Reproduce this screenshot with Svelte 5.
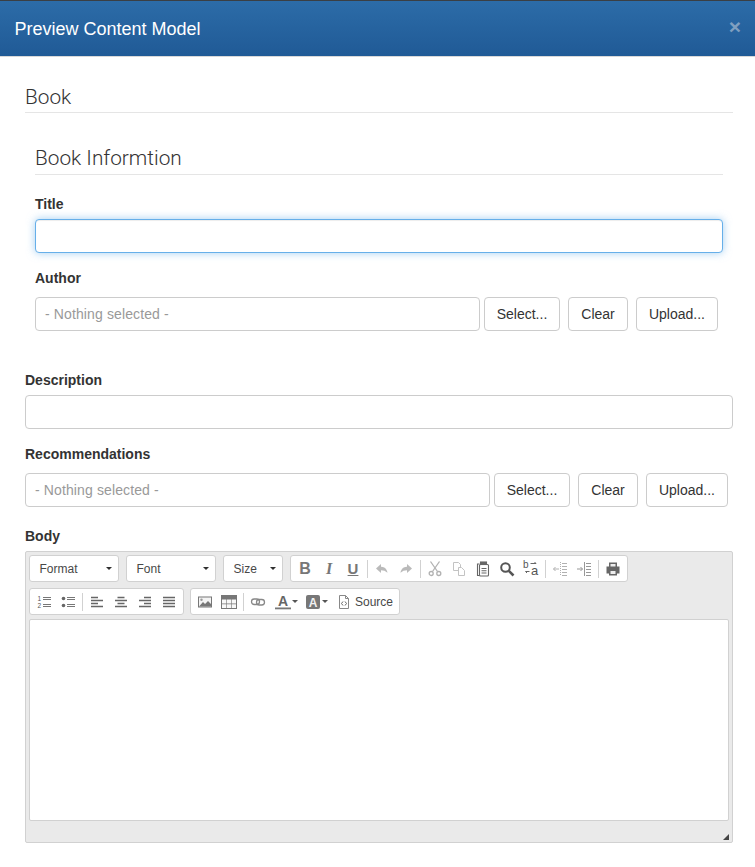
<script>
  const selects = [['Format', 90], ['Font', 90], ['Size', 60]];
</script>

{#snippet picker()}
  <div class="picker">
    <div class="fake-input">- Nothing selected -</div>
    <div class="btn b1">Select...</div>
    <div class="btn b2">Clear</div>
    <div class="btn b3">Upload...</div>
  </div>
{/snippet}

<div class="modal">
  <header class="head">
    <h1>Preview Content Model</h1>
    <span class="close">×</span>
  </header>
  <main class="body">
    <h2 class="legend">Book</h2>
    <section class="inner">
      <h2 class="legend two">Book Informtion</h2>
      <label class="lbl">Title</label>
      <div class="input focus"></div>
      <label class="lbl">Author</label>
      {@render picker()}
    </section>
    <label class="lbl desc">Description</label>
    <div class="input"></div>
    <label class="lbl">Recommendations</label>
    {@render picker()}
    <label class="lbl bodyl">Body</label>
    <div class="editor">
      <div class="row">
        {#each selects as [name, w]}
          <div class="combo" style="width:{w}px"><span>{name}</span><i class="caret"></i></div>
        {/each}
        <div class="grp">
          <span class="ic tx b">B</span>
          <span class="ic tx it">I</span>
          <span class="ic tx un">U</span>
          <span class="sep"></span>
          <span class="ic dim"><svg viewBox="0 0 16 16"><path d="M7 3 2 7.500 7 12V9.200c2.600 0 4.600.7 6.500 2.600C13 8.500 11 6 7 5.800z" fill="#777"/></svg></span>
          <span class="ic dim"><svg viewBox="0 0 16 16"><path d="M9 3l5 4.500L9 12V9.200c-2.600 0-4.600.7-6.500 2.600C3 8.500 5 6 9 5.800z" fill="#777"/></svg></span>
          <span class="sep"></span>
          <span class="ic dim"><svg viewBox="0 0 16 16" fill="none" stroke="#666" stroke-width="1.300"><path d="M3.500.5 10.500 10.500M12.500.5 5.500 10.500"/><circle cx="4.200" cy="12.500" r="2"/><circle cx="11.800" cy="12.500" r="2"/></svg></span>
          <span class="ic dim"><svg viewBox="0 0 16 16" fill="#fff" stroke="#888"><path d="M2.500 1.500h5l2 2v6h-7z"/><path d="M7.500 6.500h3l3 3v5h-6z"/></svg></span>
          <span class="ic"><svg viewBox="0 0 16 16" fill="none" stroke="#666" stroke-width="1.100"><path d="M4.500 3H2.500v11.500h2"/><rect x="4.500" y="3.500" width="9" height="11.500" rx="1"/><path d="M6.500 7.500h5M6.500 9.800h5M6.500 12h5"/><rect x="5.500" y="1" width="6" height="2.500" fill="#666"/></svg></span>
          <span class="ic"><svg viewBox="0 0 16 16" fill="none" stroke="#555"><circle cx="6.500" cy="6.500" r="4.300" stroke-width="2"/><path d="M9.800 9.800 14.500 14.500" stroke-width="2.600"/></svg></span>
          <span class="ic replace"><span class="rb">b</span><span class="ra">a</span><svg viewBox="0 0 16 16" fill="none" stroke="#666"><path d="M7.500 2.500h5.500l-1.500-1.500M6.500 10.500H2.500l1.500 1.500"/></svg></span>
          <span class="sep"></span>
          <span class="ic dim"><svg viewBox="0 0 16 16" fill="none" stroke="#666"><path d="M8.500 1v14" stroke-dasharray="1 1"/><path d="M10 2.500h5M10 5.500h5M10 8.500h5M10 11.500h5M10 14.500h5M7 8H1.500M3.500 6 1.500 8l2 2"/></svg></span>
          <span class="ic dim"><svg viewBox="0 0 16 16" fill="none" stroke="#333"><path d="M8.500 1v14"/><path d="M10 2.500h5M10 5.500h5M10 8.500h5M10 11.500h5M10 14.500h5M1 8h5.500M4.500 6l2 2-2 2"/></svg></span>
          <span class="sep"></span>
          <span class="ic"><svg viewBox="0 0 16 16"><path d="M4 1.500h8v4h2.500v7H12v2H4v-2H1.500v-7H4z" fill="#666"/><path d="M5.500 3h5v2.500h-5zM5.500 10h5v3h-5z" fill="#eee"/></svg></span>
        </div>
      </div>
      <div class="row">
        <div class="grp first">
          <span class="ic"><svg viewBox="0 0 16 16" fill="none" stroke="#777"><path d="M7 3.500h8M7 5.500h8M7 10.500h8M7 12.500h8"/><text x="1.500" y="7" class="svgt" font-size="6.500" fill="#555" stroke="none">1</text><text x="1.500" y="14" class="svgt" font-size="6.500" fill="#555" stroke="none">2</text></svg></span>
          <span class="ic"><svg viewBox="0 0 16 16" fill="none" stroke="#777"><path d="M7 3.500h8M7 5.500h8M7 10.500h8M7 12.500h8"/><circle cx="3.500" cy="4.500" r="1.800" fill="#666" stroke="none"/><circle cx="3.500" cy="11.500" r="1.800" fill="#666" stroke="none"/></svg></span>
          <span class="sep"></span>
          <span class="ic"><svg viewBox="0 0 16 16" stroke="#666" stroke-width="1.300"><path d="M2 3.500h7M2 6.500h12M2 9.500h7M2 12.500h12"/></svg></span>
          <span class="ic"><svg viewBox="0 0 16 16" stroke="#666" stroke-width="1.300"><path d="M4.500 3.500h7M2 6.500h12M4.500 9.500h7M2 12.500h12"/></svg></span>
          <span class="ic"><svg viewBox="0 0 16 16" stroke="#666" stroke-width="1.300"><path d="M7 3.500h7M2 6.500h12M7 9.500h7M2 12.500h12"/></svg></span>
          <span class="ic"><svg viewBox="0 0 16 16" stroke="#666" stroke-width="1.300"><path d="M2 3.500h12M2 6.500h12M2 9.500h12M2 12.500h12"/></svg></span>
        </div>
        <div class="grp">
          <span class="ic"><svg viewBox="0 0 16 16"><rect x="1" y="2.500" width="14" height="11" fill="#777"/><rect x="2" y="3.500" width="12" height="9" fill="#f4f4f4"/><path d="M2 12.500 6 8l2 2 3-3 3 3v2.500z" fill="#777"/><circle cx="4.500" cy="5.800" r="1.200" fill="#999"/></svg></span>
          <span class="ic"><svg viewBox="0 0 16 16"><rect x="0" y="1" width="16" height="14" fill="#777"/><path d="M1 5.500h4.300v4H1zM5.900 5.500h4.200v4H5.900zM10.700 5.500H15v4h-4.300zM1 10.200h4.300V14H1zM5.900 10.200h4.200V14H5.900zM10.700 10.200H15V14h-4.300z" fill="#f8f8f8"/></svg></span>
          <span class="sep"></span>
          <span class="ic"><svg viewBox="0 0 16 16" fill="none" stroke="#888" stroke-width="1.300"><rect x="1.500" y="5" width="8" height="5.500" rx="2.700"/><rect x="6.500" y="5.500" width="8" height="5.500" rx="2.700"/></svg></span>
          <span class="ic wide"><svg viewBox="0 0 16 16"><text x="8" y="11.500" text-anchor="middle" class="svgt" font-size="14" font-weight="700" fill="#666">A</text><rect x="0" y="13.500" width="16" height="1.800" fill="#777"/></svg><i class="caret sm"></i></span>
          <span class="ic wide"><svg viewBox="0 0 16 16"><rect x="1" y="1" width="14" height="14" rx="2" fill="#777"/><text x="8" y="12.500" text-anchor="middle" class="svgt" font-size="12" font-weight="700" fill="#f2f2f2">A</text></svg><i class="caret sm"></i></span>
          <span class="source"><svg viewBox="0 0 16 16" fill="#fff" stroke="#888"><path d="M3.500 1.500h6l3 3v10h-9z"/><path d="M9.500 1.500v3h3" fill="none"/><path d="M7 7.500 5.500 9.500 7 11.500M9 7.500l1.500 2-1.500 2" fill="none" stroke="#666"/></svg>Source</span>
        </div>
      </div>
      <div class="content"></div>
      <div class="foot"><i class="grip"></i></div>
    </div>
  </main>
</div>

<style>
  :global(body) { margin: 0; background: #fff; }
  .modal { font-family: "Liberation Sans", Arial, sans-serif; color: #333; font-size: 14px; height: 867px; overflow: hidden; }
  .head {
    height: 57px; box-sizing: border-box; padding: 0 14px 0 14.5px; display: flex; align-items: center; justify-content: space-between;
    background: linear-gradient(#2c6ca8, #205a96); border-top: 1px solid #3a3f44; border-bottom: 1px solid #d8d8d8;
    color: #fff;
  }
  h1 { margin: 0; font: 400 18px/1 "Liberation Sans", Arial, sans-serif; }
  .close { color: #7f9fc0; font: 700 21px/1 "Liberation Sans", Arial, sans-serif; position: relative; top: -2px; }
  .body { padding: 0 22px 0 25px; }
  .legend { margin: 0; height: 56px; box-sizing: border-box; padding-top: 25px; border-bottom: 1px solid #e5e5e5; font: 300 20.8px/30px Roboto, sans-serif; color: #333; }
  .two { height: 62px; padding-top: 30px; }
  .inner { padding: 0 10px; }
  .lbl { display: block; margin: 15px 0 5px; font-weight: 700; font-size: 14px; line-height: 20px; color: #333; }
  .inner .two + .lbl { margin-top: 19px; }
  .desc { margin-top: 39px; }
  .bodyl { margin-top: 19px; }
  .input { height: 34px; box-sizing: border-box; border: 1px solid #ccc; border-radius: 4px; background: #fff; }
  .focus { border-color: #66afe9; box-shadow: inset 0 1px 1px rgba(0,0,0,.075), 0 0 8px rgba(102,175,233,.6); }
  .picker { display: flex; margin: 9px 5px 0 0; }
  .fake-input { flex: 1; height: 34px; box-sizing: border-box; border: 1px solid #ccc; border-radius: 4px; padding: 0 9px; line-height: 32px; color: #999; letter-spacing: .12px; }
  .btn { height: 34px; box-sizing: border-box; border: 1px solid #ccc; border-radius: 4px; line-height: 32px; text-align: center; color: #333; }
  .b1 { width: 76px; margin-left: 4px; }
  .b2 { width: 60px; margin-left: 8px; }
  .b3 { width: 82px; margin-left: 8px; }
  .editor { height: 292px; box-sizing: border-box; border: 1px solid #d1d1d1; border-radius: 2px; background: #eaeaea; padding: 3px 3px 0; display: flex; flex-direction: column; }
  .row { display: flex; gap: 7px; height: 27px; margin-bottom: 6px; }
  .combo, .grp { box-sizing: border-box; height: 27px; background: #fff; border: 1px solid #d1d1d1; border-radius: 3px; }
  .combo { display: flex; align-items: center; justify-content: space-between; padding: 0 6px 0 9.5px; font-size: 12px; color: #484848; }
  .grp { display: flex; align-items: center; padding: 0 2px; }
  .grp.first { margin-right: -1px; }
  .ic { width: 24px; height: 16px; display: flex; justify-content: center; align-items: center; flex: none; }
  .ic svg, .source svg { width: 16px; height: 16px; display: block; flex: none; }
  .svgt { font-family: "Liberation Sans", Arial, sans-serif; }
  .replace { position: relative; }
  .rb, .ra { position: absolute; color: #555; line-height: 1; }
  .rb { left: 4px; top: -1px; font-size: 10px; }
  .ra { left: 12px; top: 3px; font-size: 13px; }
  .ic.wide { width: 30px; box-sizing: border-box; justify-content: flex-start; padding-left: 5px; gap: 1px; }
  .dim { opacity: .5; }
  .tx { font-size: 16px; color: #777; font-weight: 700; line-height: 16px; }
  .it { font-family: "Liberation Serif", serif; font-style: italic; }
  .un { text-decoration: underline; font-size: 15px; }
  .sep { width: 1px; height: 18px; margin: 0 2px; background: #d1d1d1; flex: none; }
  .caret { display: block; width: 0; height: 0; border: 3px solid transparent; border-top-color: #2f2f2f; border-bottom: 0; }
  .caret.sm { border-top-color: #555; }
  .source { display: flex; align-items: center; gap: 3px; font-size: 12px; color: #484848; padding: 0 4px 0 6px; }
  .content { height: 202px; box-sizing: border-box; background: #fff; border: 1px solid #d1d1d1; border-radius: 2px; margin-top: -2px; flex: none; }
  .foot { flex: 1; position: relative; }
  .grip { position: absolute; right: 0; bottom: 2px; width: 0; height: 0; border-style: solid; border-width: 0 0 6px 6px; border-color: transparent transparent #444 transparent; }
</style>
